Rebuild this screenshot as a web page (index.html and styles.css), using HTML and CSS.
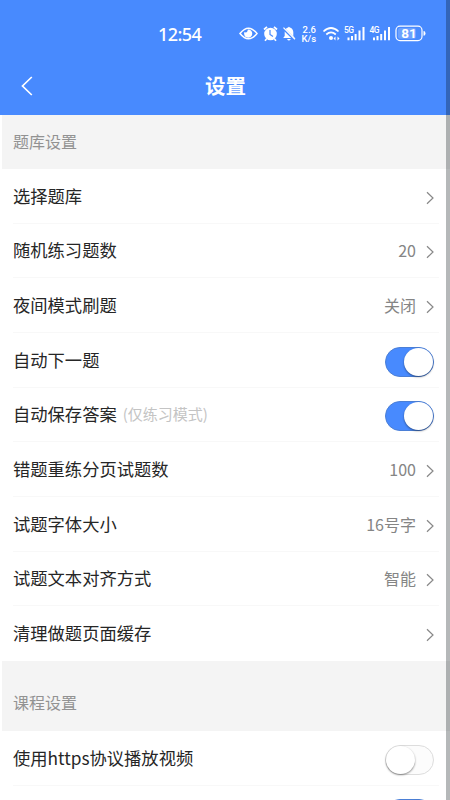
FILE: index.html
```html
<!DOCTYPE html>
<html lang="zh-CN">
<head>
<meta charset="utf-8">
<title>设置</title>
<link rel="stylesheet" href="styles.css">
</head>
<body>
<svg class="defs" width="0" height="0"><defs>
<symbol id="chevron" viewBox="0 0 8 14"><path d="M1 1.200 7 7 1 12.800" fill="none" stroke="#888" stroke-width="1.200"/></symbol>
</defs></svg>
<div class="screen">
<header class="header">
<div class="status">
<time class="clock">12:54</time>
<svg class="status-icons" width="190" height="24" viewBox="238 22 190 24">
<g fill="none" stroke="#fff" stroke-width="1.500">
<path d="M240 33.500Q248.500 22.800 257 33.500Q248.500 44.200 240 33.500Z"/>
<path d="M323.500 31.500q7.500-7 15 0M326.300 34.500q4.700-4.300 9.500 0" stroke-width="1.700"/>
<rect x="396" y="26.200" width="26" height="14.400" rx="4" stroke-width="1.200"/>
</g>
<path d="M248 29.500a4.100 4.100 0 1 1-3.600 2.500q2.800 1.500 3.600-2.500Z" fill="#fff"/>
<circle cx="270.500" cy="34" r="6.300" fill="#fff"/>
<path d="M264 29.500l3-2.700M277 29.500l-3-2.700M266.500 39l-1.500 1.700M274.500 39l1.500 1.700" stroke="#fff" stroke-width="1.700"/>
<path d="M270 30v4.500l3 2" fill="none" stroke="#488afe" stroke-width="1.200"/>
<path d="M283.200 38l1.500-2v-4q.5-3.800 3.400-4.500a1 1 0 0 1 1.700 0q3 .7 3.500 4.500v4l1.500 2ZM287 39h3.800q-1.900 3-3.800 0Z" fill="#fff"/>
<path d="M283.500 28.700l11.500 11.500" stroke="#488afe" stroke-width="2.500"/>
<path d="M283.500 27.600 295 39.300" stroke="#fff" stroke-width="1.300"/>
<circle cx="331" cy="38" r="2" fill="#fff"/>
<path d="m333.500 38.500 2-2v4ZM339.500 38.500l-2-2v4Z" fill="#fff"/>
<g fill="#fff">
<path d="M347.500 37.500h2v2.800h-2zM351 36h2v4.300h-2zM354.600 34h2v6.300h-2zM358.500 30.500h2v9.800h-2zM362.500 27h2v13.300h-2z"/>
<path d="M373 37.500h2v2.800h-2zM376.500 36h2v4.300h-2zM380.200 34h2v6.300h-2zM384 30.500h2v9.800h-2zM388 27h2v13.300h-2z"/>
<path d="M423.500 31q2 0 2 2.400t-2 2.400Z"/>
<rect x="398" y="28" width="18" height="10.800" rx="2" opacity=".2"/>
</g>
<g class="tiny">
<text x="302.500" y="32.800">2.6</text>
<text x="301.500" y="42.300">K/s</text>
<text class="net" x="344" y="33.300">5G</text>
<text class="net" x="369.600" y="33.300">4G</text>
<text class="battery" x="409" y="38.400" text-anchor="middle">81</text>
</g>
</svg>
</div>
<div class="nav">
<svg class="back" width="12" height="20" viewBox="0 0 12 20"><path d="M10.800 1 1.500 10l9.300 9" fill="none" stroke="#fff" stroke-width="1.700"/></svg>
<h1>设置</h1>
</div>
</header>
<main>
<h2 class="section">题库设置</h2>
<ul>
<li class="row">选择题库<svg class="arrow"><use href="#chevron"/></svg></li>
<li class="row">随机练习题数<span class="value">20</span><svg class="arrow"><use href="#chevron"/></svg></li>
<li class="row">夜间模式刷题<span class="value">关闭</span><svg class="arrow"><use href="#chevron"/></svg></li>
<li class="row">自动下一题<span class="toggle on"></span></li>
<li class="row">自动保存答案<small>(仅练习模式)</small><span class="toggle on"></span></li>
<li class="row">错题重练分页试题数<span class="value">100</span><svg class="arrow"><use href="#chevron"/></svg></li>
<li class="row">试题字体大小<span class="value">16号字</span><svg class="arrow"><use href="#chevron"/></svg></li>
<li class="row">试题文本对齐方式<span class="value">智能</span><svg class="arrow"><use href="#chevron"/></svg></li>
<li class="row">清理做题页面缓存<svg class="arrow"><use href="#chevron"/></svg></li>
</ul>
<h2 class="section tall">课程设置</h2>
<ul>
<li class="row">使用https协议播放视频<span class="toggle"></span></li>
<li class="row"><span class="toggle on"></span></li>
</ul>
</main>
<div class="edge"></div>
</div>
</body>
</html>
```
FILE: styles.css
```css
* { box-sizing: border-box; }
body { margin: 0; overflow: hidden; background: #fff; font-family: "Noto Sans CJK SC", "Noto Sans", sans-serif; }
h1, h2, ul { margin: 0; padding: 0; font-weight: 400; }
ul { list-style: none; }
.defs { display: block; height: 0; }
.screen { position: relative; height: 800px; overflow: hidden; }
.edge { position: absolute; top: 0; right: 0; width: 4px; height: 100%; background: rgba(0, 10, 15, .29); }
.header { height: 115px; background: #488afe; color: #fff; }
.status { height: 57px; padding: 22px 22px 0 158px; display: flex; justify-content: space-between; }
.clock { font: 500 18px/24px "Noto Sans", sans-serif; letter-spacing: -.6px; }
.status-icons { flex: none; }
.tiny { fill: #fff; font: 500 9.500px Roboto, sans-serif; }
.net { font-size: 8.500px; letter-spacing: -.6px; }
.battery { font-size: 13.500px; font-weight: 700; }
.nav { height: 58px; display: flex; align-items: center; padding: 0 21px; }
.nav h1 { flex: 1; text-align: center; font-size: 20.500px; font-weight: 700; line-height: 30px; padding: 0 11px 2px 0; }
.section { height: 54px; display: flex; align-items: center; margin-left: 2px; padding: 0 0 2px 11px; background: #f4f4f4; color: #929292; font-size: 16px; line-height: 24px; }
.section.tall { height: 70px; padding-top: 14px; }
.row { height: 54.67px; margin: 0 11px 0 13px; padding: 0 4px 0 0; display: flex; align-items: center; color: #262626; font-size: 17.300px; line-height: 26px; white-space: nowrap; border-bottom: 1px solid #f8f8f8; }
.row:last-child { border-bottom-color: transparent; }
.row small { margin-left: 6px; font-size: 15px; color: #c4c4c4; }
.value { margin-left: auto; color: #858585; font-size: 16px; }
.arrow { flex: none; width: 8px; height: 14px; margin: 4px 1px 0 10px; }
.row > .arrow:only-child { margin-left: auto; }
.toggle { flex: none; width: 49px; height: 30px; margin: 4px 1px 0 auto; border-radius: 15px; border: 1px solid #ddd; background: #fcfcfc; }
.toggle::before { content: ""; display: block; width: 29px; height: 28px; border-radius: 50%; background: #fff; box-shadow: 0 1px 2px rgba(0, 0, 0, .45); }
.toggle.on { background: #488afe; border-color: #4b7fd6; }
.toggle.on::before { margin-left: 18px; }
```
